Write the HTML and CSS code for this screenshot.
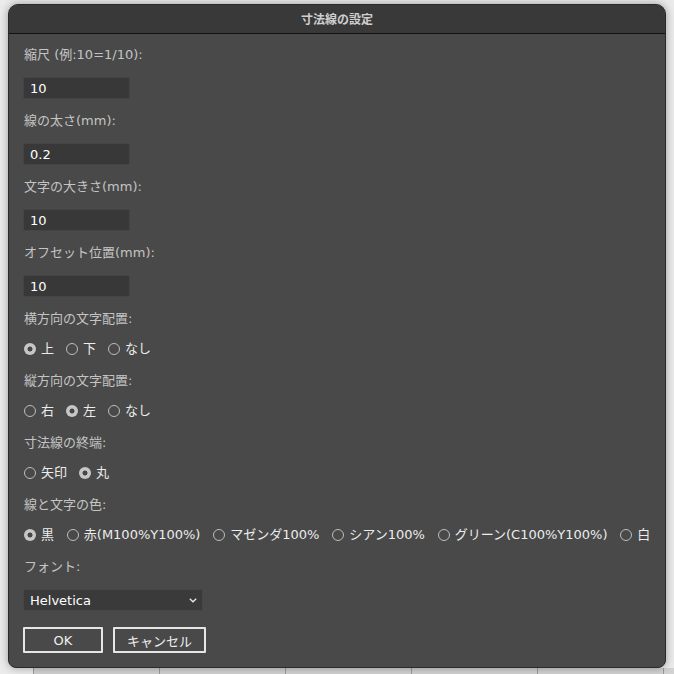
FILE: index.html
```html
<!DOCTYPE html>
<html lang="ja">
<head>
<meta charset="utf-8">
<title>寸法線の設定</title>
<link rel="stylesheet" href="styles.css">
</head>
<body>
<div class="desk">
  <div class="window">
    <div class="titlebar">寸法線の設定</div>
    <div class="content">
      <div class="group">
        <div class="label">縮尺 (例:10=1/10):</div>
        <input class="field" type="text" value="10">
      </div>
      <div class="group">
        <div class="label">線の太さ(mm):</div>
        <input class="field" type="text" value="0.2">
      </div>
      <div class="group">
        <div class="label">文字の大きさ(mm):</div>
        <input class="field" type="text" value="10">
      </div>
      <div class="group">
        <div class="label">オフセット位置(mm):</div>
        <input class="field" type="text" value="10">
      </div>
      <div class="group radio-group">
        <div class="label">横方向の文字配置:</div>
        <div class="radios">
          <span class="opt"><span class="radio on"></span>上</span>
          <span class="opt"><span class="radio"></span>下</span>
          <span class="opt"><span class="radio"></span>なし</span>
        </div>
      </div>
      <div class="group radio-group">
        <div class="label">縦方向の文字配置:</div>
        <div class="radios">
          <span class="opt"><span class="radio"></span>右</span>
          <span class="opt"><span class="radio on"></span>左</span>
          <span class="opt"><span class="radio"></span>なし</span>
        </div>
      </div>
      <div class="group radio-group">
        <div class="label">寸法線の終端:</div>
        <div class="radios">
          <span class="opt"><span class="radio"></span>矢印</span>
          <span class="opt"><span class="radio on"></span>丸</span>
        </div>
      </div>
      <div class="group radio-group">
        <div class="label">線と文字の色:</div>
        <div class="radios colors">
          <span class="opt"><span class="radio on"></span>黒</span>
          <span class="opt"><span class="radio"></span>赤(M100%Y100%)</span>
          <span class="opt"><span class="radio"></span>マゼンダ100%</span>
          <span class="opt"><span class="radio"></span>シアン100%</span>
          <span class="opt"><span class="radio"></span>グリーン(C100%Y100%)</span>
          <span class="opt"><span class="radio"></span>白</span>
        </div>
      </div>
      <div class="group select-group">
        <div class="label">フォント:</div>
        <div class="select">
          <span>Helvetica</span>
          <svg class="chev" width="8" height="5" viewBox="0 0 8 5"><path d="M0.8 0.8 L4 3.8 L7.2 0.8" fill="none" stroke="#e8e8e8" stroke-width="1.3"/></svg>
        </div>
      </div>
      <div class="buttons">
        <button class="btn ok">OK</button>
        <button class="btn cancel">キャンセル</button>
      </div>
    </div>
  </div>
  <div class="strip"></div>
</div>
</body>
</html>
```

FILE: styles.css
```css
html, body {
  margin: 0;
  padding: 0;
  background: #ebebeb;
  overflow: hidden;
}
body {
  font-family: "DejaVu Sans", "Noto Sans CJK JP", sans-serif;
  font-size: 13px;
}
.desk {
  padding: 4px 0 0 8px;
  width: 674px;
  height: 674px;
  box-sizing: border-box;
}
.window {
  position: relative;
  z-index: 1;
  width: 658px;
  height: 664px;
  box-sizing: border-box;
  background: #494949;
  border: 1px solid #2a2a2a;
  border-radius: 10px 10px 8px 8px;
  box-shadow: 0 0 8px rgba(0,0,0,0.35);
  overflow: hidden;
}
.titlebar {
  height: 28px;
  background: #393939;
  border-bottom: 1px solid #111;
  text-align: center;
  line-height: 28px;
  font-family: "Noto Sans CJK JP", sans-serif;
  font-weight: bold;
  font-size: 12px;
  color: #cfcfcf;
}
.content {
  padding: 13px 0 0 14px;
  display: flex;
  flex-direction: column;
}
.group {
  display: flex;
  flex-direction: column;
  align-items: flex-start;
  gap: 14px;
  margin-bottom: 14px;
}
.radio-group {
  margin-bottom: 16px;
}
.select-group {
  margin-bottom: 16px;
}
.label {
  height: 16px;
  line-height: 16px;
  color: #c4c4c4;
  padding-left: 1px;
  white-space: nowrap;
}
.field {
  width: 107px;
  height: 22px;
  box-sizing: border-box;
  margin: 0;
  padding: 0 0 0 6px;
  background: #383838;
  border: 1px solid #444444;
  border-radius: 2px;
  color: #ffffff;
  font-family: "DejaVu Sans", "Noto Sans CJK JP", sans-serif;
  font-size: 13px;
  outline: none;
}
.radios {
  display: flex;
  align-items: center;
  gap: 12px;
  height: 16px;
  line-height: 16px;
  padding-left: 1px;
  white-space: nowrap;
}
.radios.colors {
  gap: 12.8px;
}
.opt {
  display: flex;
  align-items: center;
  gap: 5px;
  color: #ececec;
}
.radio {
  width: 12px;
  height: 12px;
  box-sizing: border-box;
  border-radius: 50%;
  border: 1px solid #bdbdbd;
  flex: none;
}
.radio.on {
  border: none;
  background: radial-gradient(circle, #474747 0 2.2px, #c6c6c6 2.8px);
}
.select {
  width: 180px;
  height: 22px;
  box-sizing: border-box;
  background: #3a3a3a;
  border: 1px solid #464646;
  border-radius: 2px;
  display: flex;
  align-items: center;
  justify-content: space-between;
  padding: 0 5px 0 6px;
  color: #ffffff;
}
.chev {
  display: block;
}
.buttons {
  display: flex;
  gap: 10px;
}
.btn {
  height: 26px;
  box-sizing: border-box;
  margin: 0;
  padding: 0;
  background: transparent;
  border: 2px solid #e6e6e6;
  border-radius: 1px;
  color: #f0f0f0;
  font-family: "DejaVu Sans", "Noto Sans CJK JP", sans-serif;
  font-size: 13px;
}
.btn.ok {
  width: 80px;
}
.btn.cancel {
  width: 93px;
}
.strip {
  margin-left: 25px;
  height: 8px;
  background: repeating-linear-gradient(90deg, #9c9c9c 0 1px, #d2d2d2 1px 126px);
}
```
